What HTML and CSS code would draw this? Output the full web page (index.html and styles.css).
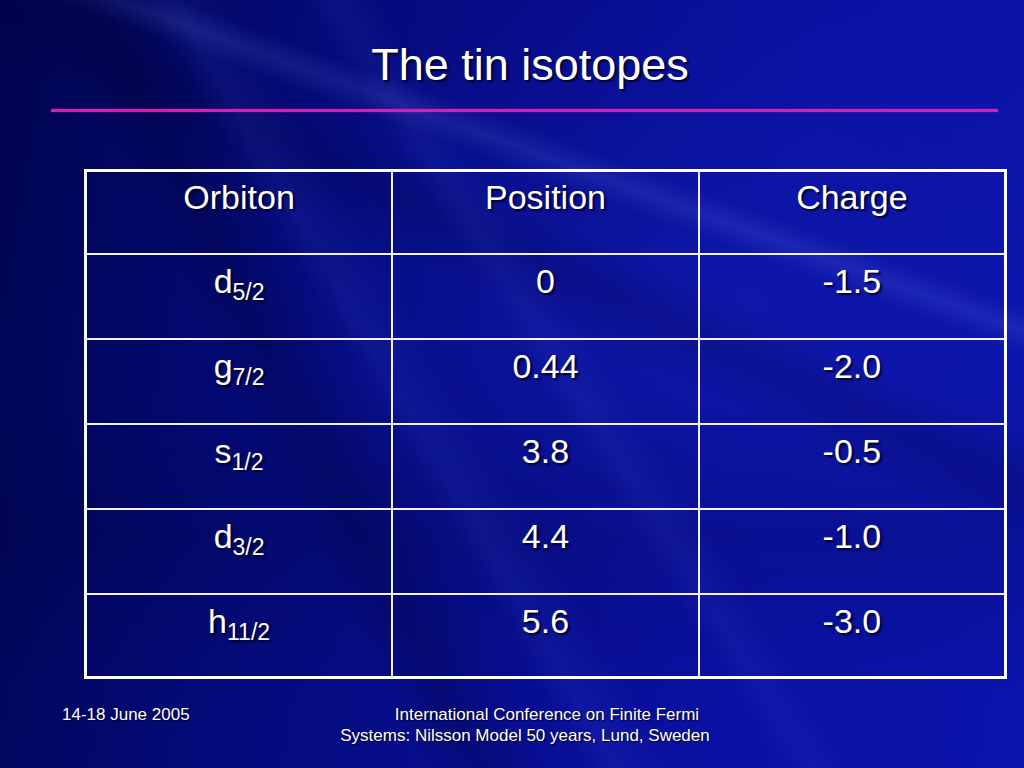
FILE: index.html
```html
<!DOCTYPE html>
<html>
<head>
<meta charset="utf-8">
<link rel="stylesheet" href="styles.css">
</head>
<body>
<div class="slide">
  <div class="streaks"></div>
  <h1 class="title">The tin isotopes</h1>
  <div class="rule"></div>
  <table class="data">
    <tr class="head"><td>Orbiton</td><td>Position</td><td>Charge</td></tr>
    <tr><td>d<sub>5/2</sub></td><td>0</td><td>-1.5</td></tr>
    <tr><td>g<sub>7/2</sub></td><td>0.44</td><td>-2.0</td></tr>
    <tr><td>s<sub>1/2</sub></td><td>3.8</td><td>-0.5</td></tr>
    <tr><td>d<sub>3/2</sub></td><td>4.4</td><td>-1.0</td></tr>
    <tr><td>h<sub>11/2</sub></td><td>5.6</td><td>-3.0</td></tr>
  </table>
  <div class="footer">
    <div class="date">14-18 June 2005</div>
    <div class="conf">
      <div class="line1">International Conference on Finite Fermi</div>
      <div class="line2">Systems: Nilsson Model 50 years, Lund, Sweden</div>
    </div>
  </div>
</div>
</body>
</html>
```

FILE: styles.css
```css
html, body {
  margin: 0;
  padding: 0;
}
body {
  width: 1024px;
  height: 768px;
  overflow: hidden;
  font-family: "Liberation Sans", Arial, sans-serif;
  color: #fff;
}
.slide {
  position: relative;
  width: 1024px;
  height: 768px;
  box-sizing: border-box;
  padding-top: 1px;
  background:
    radial-gradient(ellipse 700px 500px at 72% 40%, rgba(20, 30, 180, 0.5), rgba(20, 30, 180, 0) 70%),
    linear-gradient(100deg, #00044e 0%, #040a78 28%, #0a10a0 70%, #0b14ac 100%);
  overflow: hidden;
}
.streaks {
  position: absolute;
  inset: 0;
  pointer-events: none;
  background:
    linear-gradient(60deg, transparent 0 40%, rgba(90, 110, 255, 0.09) 42%, transparent 46%),
    linear-gradient(63deg, transparent 0 30%, rgba(0, 0, 40, 0.22) 34%, transparent 39%),
    linear-gradient(58deg, transparent 0 52%, rgba(100, 120, 255, 0.08) 54%, transparent 57%),
    linear-gradient(200deg, transparent 0 27%, rgba(130, 150, 255, 0.13) 29%, transparent 31%),
    linear-gradient(205deg, transparent 0 35%, rgba(0, 0, 50, 0.18) 39%, transparent 44%),
    linear-gradient(0deg, transparent 0 10%, rgba(0, 0, 40, 0.15) 30%, transparent 50%);
}
.title {
  position: relative;
  margin: 39px 0 0 0;
  height: 50px;
  text-align: center;
  font-size: 45px;
  font-weight: normal;
  line-height: 50px;
  padding-left: 36px;
  text-shadow: 2px 2px 2px #000022;
}
.rule {
  position: relative;
  margin: 19px 0 0 51px;
  width: 947px;
  height: 3px;
  background: #d41eb6;
  box-shadow: 0 0 2px rgba(200, 30, 170, 0.6);
}
.data {
  position: relative;
  margin: 57px 0 0 84px;
  width: 923px;
  border-collapse: collapse;
  table-layout: fixed;
  border: 3px solid #fff;
}
.data td {
  width: 33.33%;
  height: 85px;
  box-sizing: border-box;
  border: 2px solid #f2f2ff;
  text-align: center;
  vertical-align: top;
  padding: 7px 0 0 0;
  font-size: 34px;
  line-height: 39px;
  text-shadow: 2px 2px 2px #000022;
}
.data .head td {
  height: 83px;
  padding-top: 6px;
}
.data tr:last-child td {
  border-bottom: 3px solid #fff;
  height: 84px;
}
.data sub {
  font-size: 23px;
  line-height: 0;
  vertical-align: -7px;
}
.footer {
  position: relative;
  margin-top: 25px;
  display: flex;
  align-items: flex-start;
}
.date {
  margin-left: 62px;
  width: 278px;
  font-size: 17px;
  line-height: 21px;
  text-shadow: 1px 1px 1px #000022;
}
.conf {
  width: 370px;
  text-align: center;
  font-size: 17px;
  line-height: 21px;
  text-shadow: 1px 1px 1px #000022;
  white-space: nowrap;
}
.line1 {
  padding-left: 44px;
}
```
